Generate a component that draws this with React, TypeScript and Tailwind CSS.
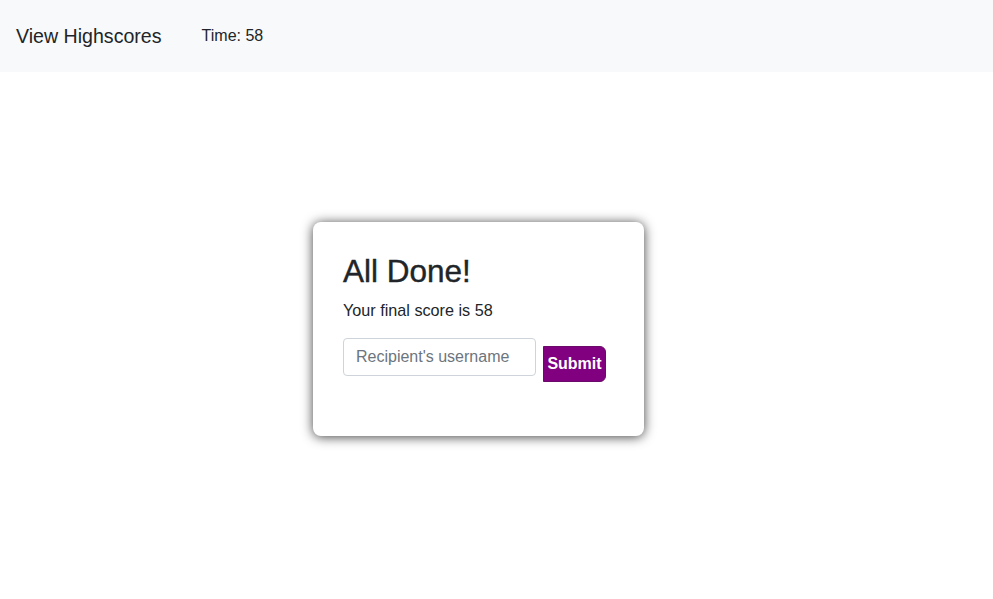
export default function App() {
  return (
    <div className="min-h-[599px] bg-white text-[#212529] font-['Liberation_Sans',Arial,sans-serif]">
      <nav className="h-[72px] bg-[#f8f9fa] flex items-center px-4">
        <span className="text-[19.6px] leading-[30px]">View Highscores</span>
        <span className="ml-[40px] text-[16px]">Time: 58</span>
      </nav>
      <div className="ml-[313px] mt-[150px] w-[331px] h-[214px] bg-white rounded-lg shadow-[0_1px_12px_rgba(0,0,0,0.75)] pt-[30px] px-[30px]">
        <h2 className="text-[31.5px] leading-[38px] [-webkit-text-stroke:0.4px_#212529] mb-2">All Done!</h2>
        <p className="text-[16.2px] leading-6 mb-4">Your final score is 58</p>
        <div className="flex items-start gap-[7px]">
          <input
            className="w-[193px] h-[38px] border border-[#ced4da] rounded px-3 text-[16px] placeholder:text-[#6c757d] outline-none"
            placeholder="Recipient's username"
          />
          <button className="mt-[8px] h-[36px] w-[63px] bg-[#800080] text-white text-[16px] font-bold border border-[#6a0a6a] rounded-r-md">
            Submit
          </button>
        </div>
      </div>
    </div>
  );
}
